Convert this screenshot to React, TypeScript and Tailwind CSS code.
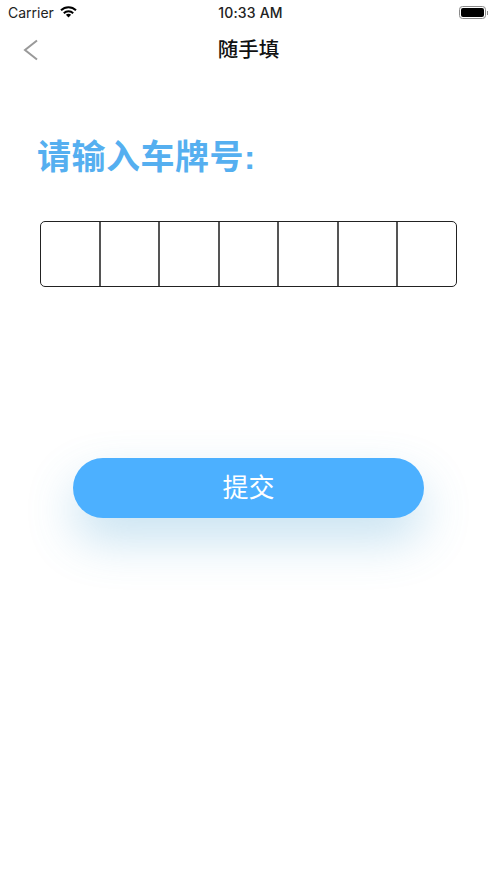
import React from 'react'

const cells = [0, 1, 2, 3, 4, 5, 6]

const StatusBar = () => (
    <div className="h-[25px] flex items-center justify-between pl-[8px] pr-[9px] relative text-[14px] text-black font-['Inter','Liberation_Sans',sans-serif]">
        <div className="flex items-center gap-[6px]">
            <span className="text-[#222]">Carrier</span>
            <svg className="mb-[1px]" width="17" height="12" viewBox="0 0 17 12" fill="none" stroke="#000" strokeWidth="2">
                <path d="M1 4.300C5.200.2 11.800.2 16 4.300" />
                <path d="M3.800 7.200c2.600-2.500 6.800-2.500 9.400 0" />
                <path d="M8.500 11.500 5.900 8.800c1.500-1.300 3.700-1.300 5.200 0z" fill="#000" stroke="none" />
            </svg>
        </div>
        <span className="absolute left-0 right-0 pl-[4px] text-center font-medium tracking-[0.2px] text-[#222]">10:33 AM</span>
        <div className="flex items-center gap-[1px]">
            <div className="w-[27px] h-[13px] rounded-[3.5px] border border-[#8a8a8a] p-[1px]">
                <div className="w-full h-full rounded-[2px] bg-black"></div>
            </div>
            <div className="w-[1px] h-[4px] bg-[#8a8a8a]"></div>
        </div>
    </div>
)

const App = () => {
    return (
        <div className="w-[497px] h-[883px] bg-white overflow-hidden font-['Liberation_Sans','Noto_Sans_CJK_SC',sans-serif]">
            <StatusBar />
            <div className="h-[50px] flex items-center justify-center relative">
                <svg className="absolute left-[23px] top-[14px]" width="16" height="22" viewBox="0 0 16 22" fill="none" stroke="#999" strokeWidth="2">
                    <path d="M14 1.500 2 11l12 9.500" />
                </svg>
                <h1 className="text-[20.5px] font-medium text-[#111]">随手填</h1>
            </div>
            <div className="pl-[37px] pr-[40px] pt-[59px]">
                <h2 className="text-[34px] leading-[46px] font-bold tracking-[0.5px] text-[#55aff0]">请输入车牌号:</h2>
                <div className="mt-[41px] ml-[3px] h-[66px] w-[417px] flex border border-[#222] rounded-[5px]">
                    {cells.map((c) => (
                        <div key={c} className="flex-1 border-r-2 border-[#555] last:border-r-0"></div>
                    ))}
                </div>
            </div>
            <div className="flex justify-center mt-[171px]">
                <button className="w-[351px] h-[60px] rounded-full bg-[#4cb0ff] text-white text-[26px] shadow-[0_22px_48px_rgba(70,160,210,0.3)]">
                    提交
                </button>
            </div>
        </div>
    )
}

export default App
